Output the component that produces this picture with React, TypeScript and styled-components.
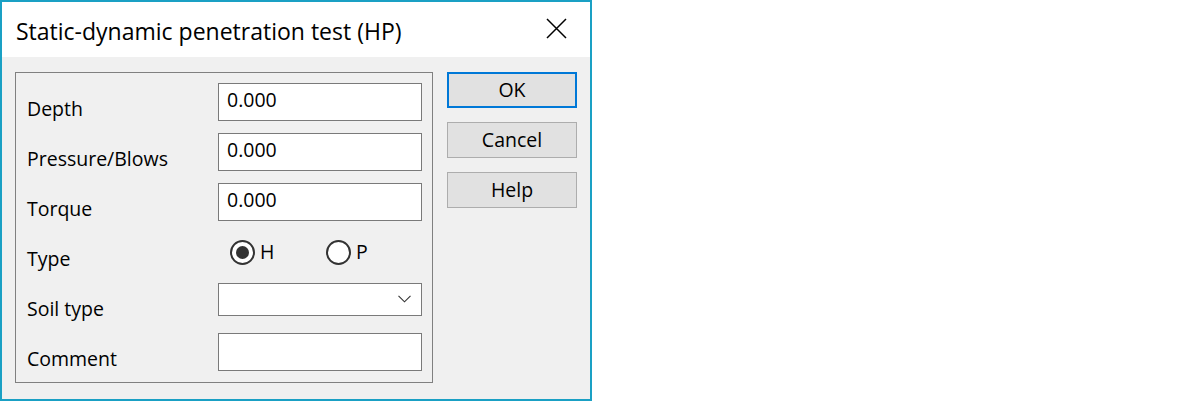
import styled, { createGlobalStyle } from 'styled-components';

const GlobalStyle = createGlobalStyle`
  html, body {
    margin: 0;
    padding: 0;
    background: #ffffff;
  }
  body {
    font-family: 'Open Sans', 'Noto Sans', sans-serif;
    color: #000000;
  }
`;

type TField = {
  label: string;
  kind: 'text' | 'radio' | 'combo';
  value?: string;
};

const fields: TField[] = [
  { label: 'Depth', kind: 'text', value: '0.000' },
  { label: 'Pressure/Blows', kind: 'text', value: '0.000' },
  { label: 'Torque', kind: 'text', value: '0.000' },
  { label: 'Type', kind: 'radio' },
  { label: 'Soil type', kind: 'combo' },
  { label: 'Comment', kind: 'text', value: '' },
];

const CloseIcon = () => (
  <svg width="21" height="21" viewBox="0 0 21 21">
    <path d="M1 1 L20 20 M20 1 L1 20" stroke="#000" strokeWidth="1.5" fill="none" />
  </svg>
);

const Chevron = () => (
  <svg width="13" height="8" viewBox="0 0 13 8">
    <path d="M0.5 0.8 L6.5 6.8 L12.5 0.8" stroke="#333" strokeWidth="1.1" fill="none" />
  </svg>
);

const App = () => {
  return (
    <>
      <GlobalStyle />
      <Window>
        <TitleBar>
          <Title>Static-dynamic penetration test (HP)</Title>
          <CloseButton>
            <CloseIcon />
          </CloseButton>
        </TitleBar>
        <Body>
          <GroupBox>
            {fields.map((f) => (
              <Row key={f.label}>
                <Label>{f.label}</Label>
                {f.kind === 'text' && <TextBox>{f.value}</TextBox>}
                {f.kind === 'combo' && (
                  <ComboBox>
                    <Chevron />
                  </ComboBox>
                )}
                {f.kind === 'radio' && (
                  <RadioGroup>
                    <RadioItem>
                      <RadioCircle checked />
                      <RadioText>H</RadioText>
                    </RadioItem>
                    <RadioItem>
                      <RadioCircle />
                      <RadioText>P</RadioText>
                    </RadioItem>
                  </RadioGroup>
                )}
              </Row>
            ))}
          </GroupBox>
          <Buttons>
            <Button isDefault>OK</Button>
            <Button>Cancel</Button>
            <Button>Help</Button>
          </Buttons>
        </Body>
      </Window>
    </>
  );
};

export default App;

const Window = styled('div')`
  box-sizing: border-box;
  width: 592px;
  height: 401px;
  border: 2px solid #1aa0c4;
  background: #f0f0f0;
  display: flex;
  flex-direction: column;
`;

const TitleBar = styled('div')`
  height: 55px;
  background: #ffffff;
  display: flex;
  align-items: center;
  justify-content: space-between;
  padding: 0 23px 0 14px;
`;

const Title = styled('div')`
  font-size: 23px;
  line-height: 28px;
  margin-top: 2px;
`;

const CloseButton = styled('div')`
  display: flex;
  width: 21px;
  height: 21px;
  margin-top: -3px;
`;

const Body = styled('div')`
  display: flex;
  align-items: flex-start;
  gap: 14px;
  padding: 15px 0 0 13px;
`;

const GroupBox = styled('div')`
  box-sizing: border-box;
  width: 418px;
  height: 311px;
  border: 1px solid #808080;
  padding: 10px 0 0 11px;
  display: grid;
  grid-auto-rows: 38px;
  row-gap: 12px;
`;

const Row = styled('div')`
  display: grid;
  grid-template-columns: 191px 204px;
  align-items: start;
`;

const Label = styled('div')`
  font-size: 19.5px;
  line-height: 24px;
  padding-top: 14px;
`;

const TextBox = styled('div')`
  box-sizing: border-box;
  height: 38px;
  background: #ffffff;
  border: 1px solid #7a7a7a;
  font-size: 19.5px;
  line-height: 24px;
  padding: 4px 8px 0;
`;

const ComboBox = styled('div')`
  box-sizing: border-box;
  height: 33px;
  background: #ffffff;
  border: 1px solid #7a7a7a;
  display: flex;
  align-items: center;
  justify-content: flex-end;
  padding: 0 10px 2px 0;
`;

const RadioGroup = styled('div')`
  height: 38px;
  display: grid;
  grid-template-columns: 96px auto;
  align-items: center;
  padding-left: 12px;
`;

const RadioItem = styled('div')`
  display: flex;
  align-items: center;
  gap: 5px;
`;

const RadioCircle = styled('div')<{ checked?: boolean }>`
  box-sizing: border-box;
  width: 25px;
  height: 25px;
  border-radius: 50%;
  border: 2px solid #333333;
  background: #ffffff;
  display: flex;
  align-items: center;
  justify-content: center;
  &::after {
    content: '';
    display: ${({ checked }) => (checked ? 'block' : 'none')};
    width: 13px;
    height: 13px;
    border-radius: 50%;
    background: #333333;
  }
`;

const RadioText = styled('span')`
  font-size: 19.5px;
  line-height: 24px;
`;

const Buttons = styled('div')`
  display: grid;
  grid-auto-rows: 36px;
  row-gap: 14px;
`;

const Button = styled('div')<{ isDefault?: boolean }>`
  box-sizing: border-box;
  width: 130px;
  background: #e1e1e1;
  border: ${({ isDefault }) => (isDefault ? '2px solid #0078d7' : '1px solid #adadad')};
  display: flex;
  align-items: center;
  justify-content: center;
  font-size: 19.5px;
  line-height: 24px;
`;
